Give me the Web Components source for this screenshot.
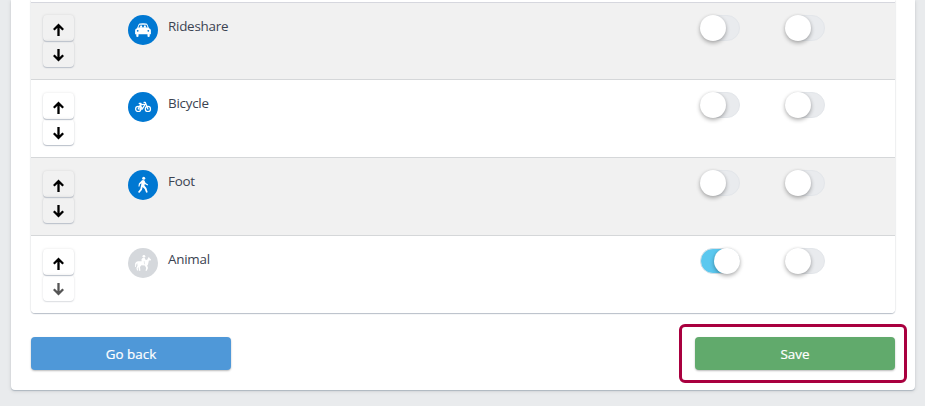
<!DOCTYPE html>
<html lang="en">
<head>
<meta charset="utf-8">
<title>Modes</title>
<style>
html,body{margin:0;height:100%;overflow:hidden}
body{background:#e9ebed;font-family:"Open Sans","Noto Sans",sans-serif;font-size:13.4px;color:#3b4351}
</style>
</head>
<body>
<settings-panel>
  <mode-table>
    <mode-row shade first icon="car" label="Rideshare"></mode-row>
    <mode-row icon="bike" label="Bicycle"></mode-row>
    <mode-row shade icon="foot" label="Foot"></mode-row>
    <mode-row last muted active icon="horse" label="Animal"></mode-row>
  </mode-table>
  <action-button slot="actions" style="--fill:#4f98d8">Go back</action-button>
  <action-button slot="actions" marked style="--fill:#61aa6c">Save</action-button>
</settings-panel>
<script>
const icons = {
  car: '<path fill-rule="evenodd" d="M3.6 1.5Q4 .7 5 .5Q8 .1 11 .5Q12 .7 12.4 1.5L14 5.2Q15.8 5.8 15.9 7.3V11.3H14.7V13.3Q14.6 14 13.6 14Q12.6 14 12.5 13.3V11.3H3.5V13.3Q3.4 14 2.4 14Q1.4 14 1.3 13.3V11.3H.1V7.3Q.2 5.8 2 5.2ZM4.5 1.7L3.3 4.6H12.7L11.5 1.7ZM1.8 7.8a.9.9 0 1 0 1.8 0a.9.9 0 1 0-1.8 0M12.4 7.8a.9.9 0 1 0 1.8 0a.9.9 0 1 0-1.8 0"/><path d="M4.8 4.7Q4.5 3.7 5.2 3.5L5.3 2.4H7V3.5Q7.7 3.7 7.5 4.7ZM8.5 4.7Q8.3 3.7 9 3.5V2.4H10.7L10.8 3.5Q11.5 3.7 11.2 4.7Z"/>',
  bike: '<g fill="none" stroke="#fff" stroke-width="1.2" stroke-linecap="round" stroke-linejoin="round"><circle cx="3.2" cy="7.9" r="2.6"/><circle cx="12.9" cy="7.9" r="2.6"/><path d="M3.2 7.9L5.4 3.9L10.3 3.1L7.2 8.1L3.2 7.9M5.4 3.9L7.2 8.1M4.2 2.4H6.1M5 2.7L5.5 3.9M9 1.3H10.2L12.9 7.9"/></g>',
  foot: '<circle cx="8.7" cy="1.3" r="1.5"/><path d="M7 3.3Q8.5 2.8 9.5 3.6L10.6 6L13.1 7.5L12.6 8.5L9.8 7.1L9.4 8.6L11.4 11L12.7 15.2L11.2 15.8L9.7 12L7.6 10L6.9 12.9L4.2 16L3 15L5.3 12.1L6.5 6.2L5 7.2L4.5 9.6L3.4 9.4L3.9 6.4Z"/>',
  horse: '<circle cx="8.9" cy="1.3" r="1.4"/><path d="M7.5 2.9L9.7 2.8L10.2 4.4L12 5L13.2 2.8L14 1.8L14.4 2.9L16.1 4.6L15.7 5.6L13.9 5.5L13 9.4L12.2 10.6L13 13L11.8 15.8H10.5L11.2 13L9.8 10.6L6.4 10.3L5 12L5.4 15.8H4L3.4 12L2.7 13.5L3.2 15.4H2L1.4 13.1L2.5 10.7L2.2 8.1L1.4 9.5L.9 12H.1V8.6Q.7 6.4 2.8 6.2L6.7 6.3L6.4 4.5Z"/><path d="M9.2 6.1L9.6 9.3" fill="none" stroke="#d5d8dc" stroke-width=".6"/>'
};
function define(name, render) {
  customElements.define(name, class extends HTMLElement {
    connectedCallback() {
      if (!this.shadowRoot) this.attachShadow({mode:'open'}).innerHTML = render(this);
    }
  });
}
define('settings-panel', () => `<style>
:host{display:flex;flex-direction:column;box-sizing:border-box;width:904px;height:390px;margin-left:11px;padding:0 20px;background:#fff;border-radius:0 0 4px 4px;box-shadow:0 1px 1px #aeb7c0,0 1px 4px #0000001f}
footer{display:flex;justify-content:space-between;margin-top:24px}
</style><slot></slot><footer><slot name="actions"></slot></footer>`);
define('mode-table', () => `<style>
:host{display:block;box-sizing:border-box;height:313px;padding-top:2px;border-radius:0 0 4px 4px;box-shadow:0 1px 1px #b9bfc9,0 0 2px #00000026;background:#fff}
div{border-top:1px solid #d6d7de}
</style><div><slot></slot></div>`);
define('mode-row', el => `<style>
:host{display:grid;grid-template-columns:85px 572px 85px 1fr;align-items:start;box-sizing:border-box;height:78px;padding:12px 12px 0;border-bottom:1px solid #d5d7d9;background:#fff}
:host([shade]){background:#f1f1f1}
:host([first]){height:77px}
:host([last]){border:0;height:77px;border-radius:0 0 4px 4px}
:host(:not([first])) order-buttons{margin-top:1px}
.label{display:flex;gap:10px}
.label span{line-height:22px;letter-spacing:-.24px}
</style>
<order-buttons ${el.hasAttribute('last') ? 'end' : ''}></order-buttons>
<div class="label"><mode-icon icon="${el.getAttribute('icon')}" ${el.hasAttribute('muted') ? 'muted' : ''}></mode-icon><span>${el.getAttribute('label')}</span></div>
<toggle-switch ${el.hasAttribute('active') ? 'on' : ''}></toggle-switch><toggle-switch></toggle-switch>`);
define('order-buttons', el => {
  const arrow = d => `<button aria-label="Move"><svg width="11" height="14" viewBox="0 0 11 14" fill="none" stroke="currentColor" stroke-width="2.3"><path d="${d}"/></svg></button>`;
  return `<style>
:host{display:flex;flex-direction:column;width:31px}
button{height:26px;box-sizing:border-box;padding:4px 0 0;border:0;border-radius:4px;background:transparent;color:#000;box-shadow:0 1px 1px #bbc1cb,0 0 3px #0000001c;display:flex;justify-content:center;align-items:center}
button+button{padding:2px 0 0}
:host([end]) button+button{color:#555;box-shadow:0 1px 1px #dddfe3,0 0 3px #00000018}
</style>${arrow('M5.5 13V2M.8 6.8L5.5 2.2L10.2 6.8')}${arrow('M5.5 1V12M.8 7.2L5.5 11.8L10.2 7.2')}`;
});
define('mode-icon', el => `<style>
:host{display:flex;align-items:center;justify-content:center;width:30px;height:30px;border-radius:50%;background:#0078d2}
:host([muted]){background:#d5d8dc}
svg{overflow:visible}
</style><svg width="16" height="${el.getAttribute('icon') === 'bike' ? 12 : el.getAttribute('icon') === 'car' ? 14 : 16}" fill="#fff">${icons[el.getAttribute('icon')]}</svg>`);
define('toggle-switch', () => `<style>
:host{display:flex;box-sizing:border-box;width:40px;height:26px;border-radius:13px;background:#e9ebee;border:1px solid #e3e6ea}
i{width:26px;height:26px;margin:-1px;border-radius:50%;background:#fff;box-shadow:0 2px 4px #0000004d,0 0 3px #00000010}
:host([on]){background:#5bc8ef;border-color:#d6e0e7;justify-content:flex-end}
</style><i></i>`);
define('action-button', () => `<style>
:host{display:block;position:relative;width:200px;height:33px}
button{width:100%;height:100%;border:0;border-radius:4px;background:var(--fill);color:#fff;font:inherit;-webkit-text-stroke:.2px #fff;padding:0;box-shadow:0 1px 2px #00000045}
:host([marked])::after{content:"";position:absolute;left:-16px;top:-13.5px;width:222px;height:53px;border:3px solid #a9003f;border-radius:6px}
</style><button><slot></slot></button>`);
</script>
</body>
</html>
